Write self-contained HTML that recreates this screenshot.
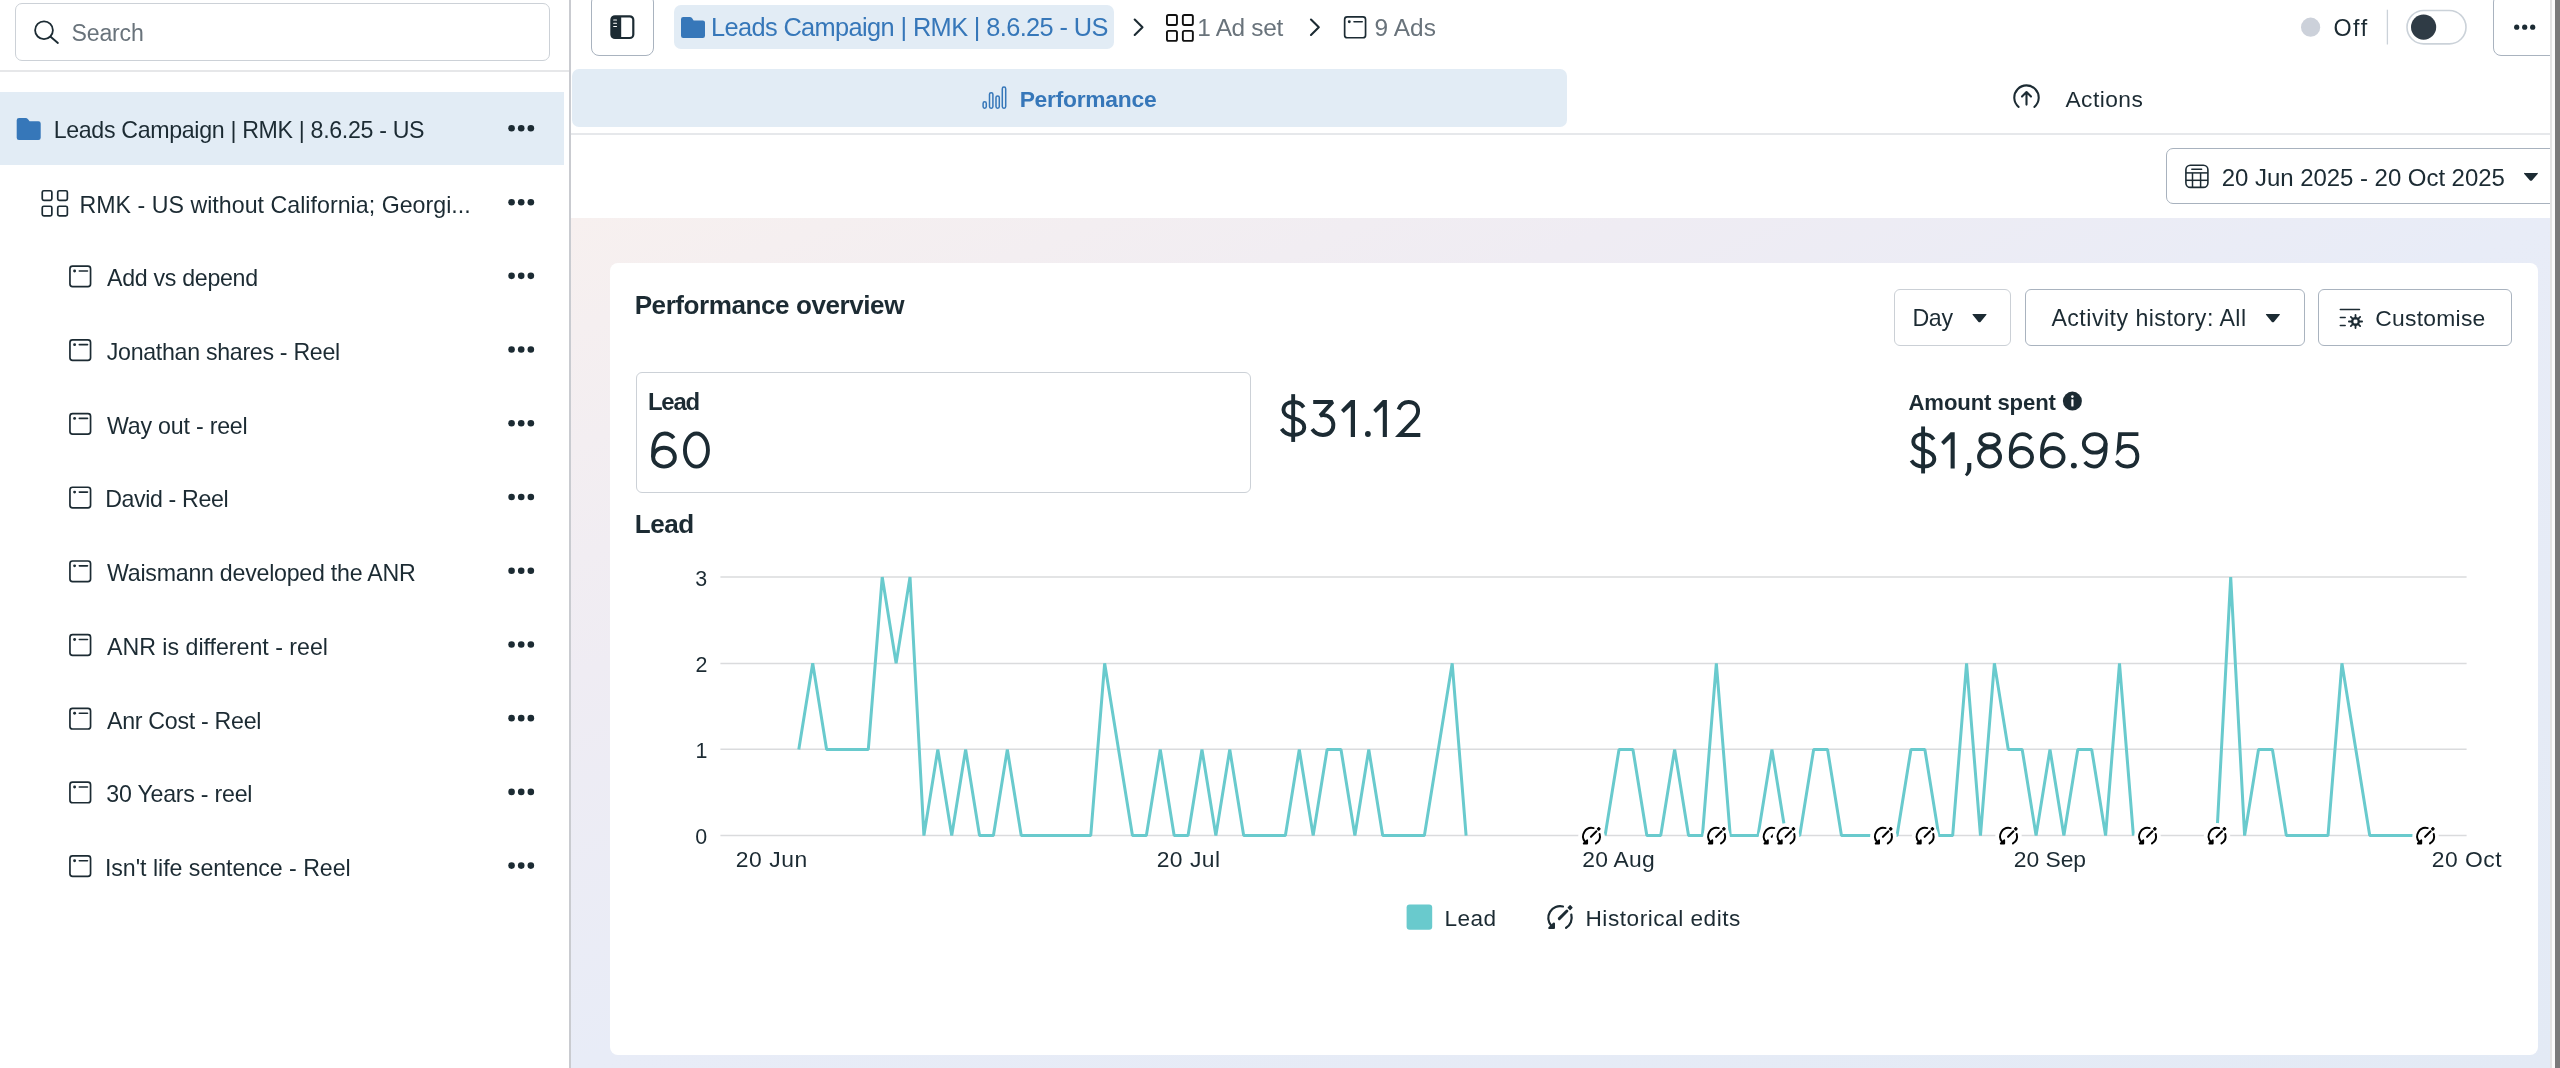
<!DOCTYPE html>
<html><head><meta charset="utf-8"><title>Ads Manager - Performance</title>
<style>
html,body{margin:0;padding:0;width:2560px;height:1068px;overflow:hidden;background:#fff;font-family:"Liberation Sans",sans-serif;}
.abs{position:absolute;box-sizing:border-box;}
#sidebar{left:0;top:0;width:570px;height:1068px;background:#fff;}
#sideborder{left:569.3px;top:0;width:1.8px;height:1068px;background:#c9cbd0;}
#search{left:15px;top:3.25px;width:534.5px;height:57.25px;border:1.4px solid #ccd1d7;border-radius:7px;background:#fff;}
#sep1{left:0;top:70.4px;width:569.5px;height:1.5px;background:#e6e7e9;}
#selrow{left:0;top:91.5px;width:564px;height:73.5px;background:#e2ecf5;}
#main{left:571px;top:0;width:1979.5px;height:1068px;overflow:hidden;background:#fff;}
#bg{left:571px;top:218px;width:1979.5px;height:850px;background:linear-gradient(to bottom right,#f7f0ef 0%,#efecf3 27%,#e8ecf7 50%,#e3eaf5 100%);}
#bgshade{left:571px;top:218px;width:1979.5px;height:850px;background:linear-gradient(180deg,rgba(255,255,255,0) 0%,rgba(228,234,247,0.55) 100%);}
#toggle{left:590.6px;top:-6px;width:63.2px;height:62.3px;border:1.5px solid #a9b3bf;border-radius:8px;background:#fff;}
#crumb{left:674px;top:5px;width:440px;height:44px;border-radius:7px;background:#e2ecf5;}
#perftab{left:572px;top:69px;width:995px;height:57.5px;border-radius:7px;background:#e2ecf5;}
#sep2{left:571px;top:133.2px;width:1979.5px;height:1.5px;background:#e6e8eb;}
#more{left:2493px;top:-6px;width:70px;height:62.2px;border:1.5px solid #a9b3bf;border-radius:8px;background:#fff;}
#date{left:2165.5px;top:148px;width:420px;height:56px;border:1.4px solid #a8b2be;border-radius:7px;background:#fff;}
#rline{left:2550.3px;top:0;width:1.8px;height:1068px;background:#e3e3e3;}
#rwhite{left:2552.1px;top:0;width:3.2px;height:1068px;background:#fbfbfb;}
#rdark{left:2555.3px;top:0;width:4.7px;height:1068px;background:#7a7a7a;}
#card{left:609.5px;top:263px;width:1928px;height:792px;border-radius:8px;background:#fff;}
#daybtn{left:1894px;top:289px;width:116.7px;height:56.7px;border:1.4px solid #cbd0d6;border-radius:6px;}
#actbtn{left:2025px;top:289px;width:279.5px;height:56.7px;border:1.4px solid #a9b3bf;border-radius:6px;}
#custbtn{left:2318px;top:289px;width:193.6px;height:56.7px;border:1.4px solid #a9b3bf;border-radius:6px;}
#leadbox{left:635.6px;top:372.4px;width:615.8px;height:120.6px;border:1.4px solid #ccd1d7;border-radius:6px;}
svg#ov{position:absolute;left:0;top:0;will-change:transform;}
svg text{font-family:"Liberation Sans",sans-serif;}
</style></head>
<body>
<div class="abs" id="sidebar"></div>
<div class="abs" id="search"></div>
<div class="abs" id="sep1"></div>
<div class="abs" id="selrow"></div>
<div class="abs" id="main"></div>
<div class="abs" id="bg"></div>
<div class="abs" id="toggle"></div>
<div class="abs" id="crumb"></div>
<div class="abs" id="perftab"></div>
<div class="abs" id="sep2"></div>
<div class="abs" id="more"></div>
<div class="abs" id="date"></div>
<div class="abs" id="rline"></div>
<div class="abs" id="rwhite"></div>
<div class="abs" id="rdark"></div>
<div class="abs" id="sideborder"></div>
<div class="abs" id="card"></div>
<div class="abs" id="daybtn"></div>
<div class="abs" id="actbtn"></div>
<div class="abs" id="custbtn"></div>
<div class="abs" id="leadbox"></div>
<svg id="ov" width="2560" height="1068" viewBox="0 0 2560 1068">
<g id="sidebar-icons">
<circle cx="44.0" cy="30.2" r="8.9" fill="none" stroke="#1c2b33" stroke-width="1.8"/>
<line x1="50.6" y1="36.8" x2="57.9" y2="43.0" stroke="#1c2b33" stroke-width="1.9" stroke-linecap="round"/>
<path d="M16.7,120.3 Q16.7,118 19,118 L25.6,118 Q27,118 28,119.2 L29.6,121.3 L38.4,121.3 Q40.7,121.3 40.7,123.6 L40.7,137.7 Q40.7,140 38.4,140 L19,140 Q16.7,140 16.7,137.7 Z" fill="#3677b9"/>
<circle cx="511.55" cy="128.20" r="3.3" fill="#1c2b33"/><circle cx="521.20" cy="128.20" r="3.3" fill="#1c2b33"/><circle cx="530.85" cy="128.20" r="3.3" fill="#1c2b33"/>
<rect x="42.25" y="190.75" width="9.60" height="9.60" rx="1.6" fill="none" stroke="#1c2b33" stroke-width="1.7"/><rect x="57.75" y="190.75" width="9.60" height="9.60" rx="1.6" fill="none" stroke="#1c2b33" stroke-width="1.7"/><rect x="42.25" y="206.25" width="9.60" height="9.60" rx="1.6" fill="none" stroke="#1c2b33" stroke-width="1.7"/><rect x="57.75" y="206.25" width="9.60" height="9.60" rx="1.6" fill="none" stroke="#1c2b33" stroke-width="1.7"/>
<circle cx="511.55" cy="202.30" r="3.3" fill="#1c2b33"/><circle cx="521.20" cy="202.30" r="3.3" fill="#1c2b33"/><circle cx="530.85" cy="202.30" r="3.3" fill="#1c2b33"/>
<rect x="69.95" y="266.10" width="20.60" height="20.60" rx="2.6" fill="none" stroke="#1c2b33" stroke-width="1.7"/><circle cx="74.60" cy="270.95" r="1.45" fill="#1c2b33"/><line x1="79.30" y1="270.95" x2="87.50" y2="270.95" stroke="#1c2b33" stroke-width="1.6" stroke-linecap="round"/>
<circle cx="511.55" cy="275.85" r="3.3" fill="#1c2b33"/><circle cx="521.20" cy="275.85" r="3.3" fill="#1c2b33"/><circle cx="530.85" cy="275.85" r="3.3" fill="#1c2b33"/>
<rect x="69.95" y="339.82" width="20.60" height="20.60" rx="2.6" fill="none" stroke="#1c2b33" stroke-width="1.7"/><circle cx="74.60" cy="344.67" r="1.45" fill="#1c2b33"/><line x1="79.30" y1="344.67" x2="87.50" y2="344.67" stroke="#1c2b33" stroke-width="1.6" stroke-linecap="round"/>
<circle cx="511.55" cy="349.57" r="3.3" fill="#1c2b33"/><circle cx="521.20" cy="349.57" r="3.3" fill="#1c2b33"/><circle cx="530.85" cy="349.57" r="3.3" fill="#1c2b33"/>
<rect x="69.95" y="413.54" width="20.60" height="20.60" rx="2.6" fill="none" stroke="#1c2b33" stroke-width="1.7"/><circle cx="74.60" cy="418.39" r="1.45" fill="#1c2b33"/><line x1="79.30" y1="418.39" x2="87.50" y2="418.39" stroke="#1c2b33" stroke-width="1.6" stroke-linecap="round"/>
<circle cx="511.55" cy="423.29" r="3.3" fill="#1c2b33"/><circle cx="521.20" cy="423.29" r="3.3" fill="#1c2b33"/><circle cx="530.85" cy="423.29" r="3.3" fill="#1c2b33"/>
<rect x="69.95" y="487.26" width="20.60" height="20.60" rx="2.6" fill="none" stroke="#1c2b33" stroke-width="1.7"/><circle cx="74.60" cy="492.11" r="1.45" fill="#1c2b33"/><line x1="79.30" y1="492.11" x2="87.50" y2="492.11" stroke="#1c2b33" stroke-width="1.6" stroke-linecap="round"/>
<circle cx="511.55" cy="497.01" r="3.3" fill="#1c2b33"/><circle cx="521.20" cy="497.01" r="3.3" fill="#1c2b33"/><circle cx="530.85" cy="497.01" r="3.3" fill="#1c2b33"/>
<rect x="69.95" y="560.98" width="20.60" height="20.60" rx="2.6" fill="none" stroke="#1c2b33" stroke-width="1.7"/><circle cx="74.60" cy="565.83" r="1.45" fill="#1c2b33"/><line x1="79.30" y1="565.83" x2="87.50" y2="565.83" stroke="#1c2b33" stroke-width="1.6" stroke-linecap="round"/>
<circle cx="511.55" cy="570.73" r="3.3" fill="#1c2b33"/><circle cx="521.20" cy="570.73" r="3.3" fill="#1c2b33"/><circle cx="530.85" cy="570.73" r="3.3" fill="#1c2b33"/>
<rect x="69.95" y="634.70" width="20.60" height="20.60" rx="2.6" fill="none" stroke="#1c2b33" stroke-width="1.7"/><circle cx="74.60" cy="639.55" r="1.45" fill="#1c2b33"/><line x1="79.30" y1="639.55" x2="87.50" y2="639.55" stroke="#1c2b33" stroke-width="1.6" stroke-linecap="round"/>
<circle cx="511.55" cy="644.45" r="3.3" fill="#1c2b33"/><circle cx="521.20" cy="644.45" r="3.3" fill="#1c2b33"/><circle cx="530.85" cy="644.45" r="3.3" fill="#1c2b33"/>
<rect x="69.95" y="708.42" width="20.60" height="20.60" rx="2.6" fill="none" stroke="#1c2b33" stroke-width="1.7"/><circle cx="74.60" cy="713.27" r="1.45" fill="#1c2b33"/><line x1="79.30" y1="713.27" x2="87.50" y2="713.27" stroke="#1c2b33" stroke-width="1.6" stroke-linecap="round"/>
<circle cx="511.55" cy="718.17" r="3.3" fill="#1c2b33"/><circle cx="521.20" cy="718.17" r="3.3" fill="#1c2b33"/><circle cx="530.85" cy="718.17" r="3.3" fill="#1c2b33"/>
<rect x="69.95" y="782.14" width="20.60" height="20.60" rx="2.6" fill="none" stroke="#1c2b33" stroke-width="1.7"/><circle cx="74.60" cy="786.99" r="1.45" fill="#1c2b33"/><line x1="79.30" y1="786.99" x2="87.50" y2="786.99" stroke="#1c2b33" stroke-width="1.6" stroke-linecap="round"/>
<circle cx="511.55" cy="791.89" r="3.3" fill="#1c2b33"/><circle cx="521.20" cy="791.89" r="3.3" fill="#1c2b33"/><circle cx="530.85" cy="791.89" r="3.3" fill="#1c2b33"/>
<rect x="69.95" y="855.86" width="20.60" height="20.60" rx="2.6" fill="none" stroke="#1c2b33" stroke-width="1.7"/><circle cx="74.60" cy="860.71" r="1.45" fill="#1c2b33"/><line x1="79.30" y1="860.71" x2="87.50" y2="860.71" stroke="#1c2b33" stroke-width="1.6" stroke-linecap="round"/>
<circle cx="511.55" cy="865.61" r="3.3" fill="#1c2b33"/><circle cx="521.20" cy="865.61" r="3.3" fill="#1c2b33"/><circle cx="530.85" cy="865.61" r="3.3" fill="#1c2b33"/>
</g>
<g id="header-icons">
<rect x="611.4" y="16.3" width="21.9" height="21.7" rx="3.6" fill="none" stroke="#1c2b33" stroke-width="2.2"/>
<path d="M613,16.3 L621.2,16.3 L621.2,38 L613,38 Q611.4,38 611.4,36 L611.4,18 Q611.4,16.3 613,16.3 Z" fill="#1c2b33"/>
<line x1="613.7" y1="20.0" x2="616.5" y2="20.0" stroke="#fff" stroke-width="1.1" stroke-linecap="round"/>
<line x1="613.7" y1="23.3" x2="616.5" y2="23.3" stroke="#fff" stroke-width="1.1" stroke-linecap="round"/>
<line x1="613.7" y1="26.5" x2="616.5" y2="26.5" stroke="#fff" stroke-width="1.1" stroke-linecap="round"/>
<path d="M681,19.2 Q681,17 683.2,17 L689.8,17 Q691.1,17 692,18.1 L693.6,20.4 L702.8,20.4 Q705,20.4 705,22.6 L705,35.8 Q705,38 702.8,38 L683.2,38 Q681,38 681,35.8 Z" fill="#3677b9"/>
<path d="M1134.7,19.5 L1142.5,27.2 L1134.7,34.9" fill="none" stroke="#1c2b33" stroke-width="2.1" stroke-linecap="round" stroke-linejoin="round"/>
<path d="M1311,19.5 L1318.8,27.2 L1311,34.9" fill="none" stroke="#1c2b33" stroke-width="2.1" stroke-linecap="round" stroke-linejoin="round"/>
<rect x="1166.95" y="14.95" width="10.00" height="10.00" rx="1.6" fill="none" stroke="#111" stroke-width="1.9"/><rect x="1182.85" y="14.95" width="10.00" height="10.00" rx="1.6" fill="none" stroke="#111" stroke-width="1.9"/><rect x="1166.95" y="30.85" width="10.00" height="10.00" rx="1.6" fill="none" stroke="#111" stroke-width="1.9"/><rect x="1182.85" y="30.85" width="10.00" height="10.00" rx="1.6" fill="none" stroke="#111" stroke-width="1.9"/>
<rect x="1344.65" y="16.85" width="20.90" height="20.90" rx="2.6" fill="none" stroke="#1c2b33" stroke-width="1.7"/><circle cx="1349.30" cy="21.70" r="1.45" fill="#1c2b33"/><line x1="1354.00" y1="21.70" x2="1362.20" y2="21.70" stroke="#1c2b33" stroke-width="1.6" stroke-linecap="round"/>
<rect x="983.10" y="101.80" width="3.20" height="6.40" rx="1.6" fill="none" stroke="#3677b9" stroke-width="1.5"/>
<rect x="989.50" y="92.70" width="3.40" height="15.50" rx="1.6" fill="none" stroke="#3677b9" stroke-width="1.5"/>
<rect x="996.00" y="95.90" width="3.30" height="12.30" rx="1.6" fill="none" stroke="#3677b9" stroke-width="1.5"/>
<rect x="1002.30" y="87.10" width="3.40" height="21.10" rx="1.6" fill="none" stroke="#3677b9" stroke-width="1.5"/>
<path d="M2018.66,106.95 A12.2,12.2 0 1 1 2034.34,106.95" fill="none" stroke="#1c2b33" stroke-width="2.1" stroke-linecap="round"/>
<path d="M2026.5,104.6 L2026.5,92.1 M2022.0,96.6 L2026.5,92.1 L2031.0,96.6" fill="none" stroke="#1c2b33" stroke-width="2.1" stroke-linecap="round" stroke-linejoin="round"/>
<circle cx="2310.6" cy="27.2" r="9.6" fill="#ccd1da"/>
<line x1="2387.4" y1="9.7" x2="2387.4" y2="44.5" stroke="#cbd2d9" stroke-width="1.3"/>
<rect x="2407" y="10.5" width="59" height="33.4" rx="16.7" fill="#fff" stroke="#cbd2d9" stroke-width="1.6"/>
<circle cx="2423.6" cy="27.1" r="12.6" fill="#2f3b45"/>
<circle cx="2516.70" cy="27.20" r="2.6" fill="#1c2b33"/><circle cx="2524.70" cy="27.20" r="2.6" fill="#1c2b33"/><circle cx="2532.70" cy="27.20" r="2.6" fill="#1c2b33"/>
<rect x="2185.9" y="165.2" width="22" height="22.2" rx="4.5" fill="none" stroke="#1c2b33" stroke-width="1.6"/>
<line x1="2191.8" y1="169.2" x2="2201.6" y2="169.2" stroke="#1c2b33" stroke-width="1.5" stroke-linecap="round"/>
<line x1="2185.9" y1="172.9" x2="2207.9" y2="172.9" stroke="#1c2b33" stroke-width="1.5"/>
<line x1="2185.9" y1="180.3" x2="2207.9" y2="180.3" stroke="#1c2b33" stroke-width="1.5"/>
<line x1="2192.5" y1="172.9" x2="2192.5" y2="187.4" stroke="#1c2b33" stroke-width="1.5"/>
<line x1="2200.6" y1="172.9" x2="2200.6" y2="187.4" stroke="#1c2b33" stroke-width="1.5"/>
<path d="M2524.50,173.00 L2537.40,173.00 Q2538.40,172.40 2537.60,174.00 L2531.95,180.40 Q2530.95,181.00 2529.95,180.40 L2524.30,174.00 Q2523.50,172.40 2524.50,173.00 Z" fill="#1c2b33"/>
</g>
<g id="card-icons">
<path d="M1973.00,314.10 L1986.00,314.10 Q1987.00,313.50 1986.20,315.10 L1980.50,321.90 Q1979.50,322.50 1978.50,321.90 L1972.80,315.10 Q1972.00,313.50 1973.00,314.10 Z" fill="#1c2b33"/>
<path d="M2266.40,314.10 L2279.40,314.10 Q2280.40,313.50 2279.60,315.10 L2273.90,321.90 Q2272.90,322.50 2271.90,321.90 L2266.20,315.10 Q2265.40,313.50 2266.40,314.10 Z" fill="#1c2b33"/>
<line x1="2340.3" y1="309.5" x2="2359.5" y2="309.5" stroke="#1c2b33" stroke-width="1.5" stroke-linecap="round"/>
<line x1="2340.3" y1="317.4" x2="2345.2" y2="317.4" stroke="#1c2b33" stroke-width="1.5" stroke-linecap="round"/>
<line x1="2340.3" y1="325.4" x2="2345.2" y2="325.4" stroke="#1c2b33" stroke-width="1.5" stroke-linecap="round"/>
<line x1="2355.50" y1="318.50" x2="2355.50" y2="314.90" stroke="#1c2b33" stroke-width="1.8" stroke-linecap="round"/><line x1="2357.62" y1="319.38" x2="2360.17" y2="316.83" stroke="#1c2b33" stroke-width="1.8" stroke-linecap="round"/><line x1="2358.50" y1="321.50" x2="2362.10" y2="321.50" stroke="#1c2b33" stroke-width="1.8" stroke-linecap="round"/><line x1="2357.62" y1="323.62" x2="2360.17" y2="326.17" stroke="#1c2b33" stroke-width="1.8" stroke-linecap="round"/><line x1="2355.50" y1="324.50" x2="2355.50" y2="328.10" stroke="#1c2b33" stroke-width="1.8" stroke-linecap="round"/><line x1="2353.38" y1="323.62" x2="2350.83" y2="326.17" stroke="#1c2b33" stroke-width="1.8" stroke-linecap="round"/><line x1="2352.50" y1="321.50" x2="2348.90" y2="321.50" stroke="#1c2b33" stroke-width="1.8" stroke-linecap="round"/><line x1="2353.38" y1="319.38" x2="2350.83" y2="316.83" stroke="#1c2b33" stroke-width="1.8" stroke-linecap="round"/>
<circle cx="2355.5" cy="321.5" r="3.4" fill="none" stroke="#1c2b33" stroke-width="2.1"/>
<circle cx="2072.4" cy="401.1" r="9.5" fill="#1c2b33"/>
<circle cx="2072.4" cy="396.6" r="1.3" fill="#fff"/>
<rect x="2071.3" y="399.3" width="2.2" height="7.2" rx="0.6" fill="#fff"/>
<g transform="translate(651.20,431.50) scale(1.0000,1.0137)"><ellipse cx="12.8" cy="25.3" rx="10.85" ry="9.35" fill="none" stroke="#1c2b33" stroke-width="3.9"/><path d="M22.6,6.6 C20.4,3.6 17.3,1.95 13.5,1.95 C6.2,1.95 1.95,9.6 1.95,20.5 L1.95,25.5" fill="none" stroke="#1c2b33" stroke-width="3.9"/></g><g transform="translate(683.00,431.50) scale(1.0000,1.0137)"><ellipse cx="13.45" cy="18.3" rx="11.5" ry="16.35" fill="none" stroke="#1c2b33" stroke-width="3.9"/></g>
<g transform="translate(1280.00,400.00) scale(0.9906,1.0082)"><path d="M23.9,7.3 C21.8,3.9 18.1,1.95 13.3,1.95 C7.3,1.95 3.5,5.1 3.5,9.9 C3.5,14.6 7.3,16.5 13.2,18.0 C20.2,19.7 24.5,22.1 24.5,27.1 C24.5,31.9 20.0,34.65 13.3,34.65 C8.1,34.65 4.0,32.3 1.6,28.6" fill="none" stroke="#1c2b33" stroke-width="3.9"/><line x1="13.3" y1="-5.8" x2="13.3" y2="41.6" stroke="#1c2b33" stroke-width="3.9"/></g><g transform="translate(1310.60,400.00) scale(1.0000,1.0082)"><path d="M2.6,1.95 L22.0,1.95 L9.6,15.5 C10.7,15.2 11.6,15.0 12.6,15.0 C18.7,15.0 22.75,19.1 22.75,24.9 C22.75,30.8 18.4,34.65 12.3,34.65 C7.8,34.65 4.0,32.6 1.6,28.9" fill="none" stroke="#1c2b33" stroke-width="3.9" stroke-linejoin="bevel"/></g><g transform="translate(1340.90,400.00) scale(1.0292,1.0082)"><path d="M9.6,0 L13.7,0 L13.7,36.6 L9.6,36.6 L9.6,6.4 L2.8,12.8 L0.1,9.8 Z" fill="#1c2b33"/></g><g transform="translate(1365.00,400.00) scale(0.9914,1.0082)"><circle cx="2.9" cy="33.7" r="2.9" fill="#1c2b33"/></g><g transform="translate(1373.10,400.00) scale(1.0073,1.0082)"><path d="M9.6,0 L13.7,0 L13.7,36.6 L9.6,36.6 L9.6,6.4 L2.8,12.8 L0.1,9.8 Z" fill="#1c2b33"/></g><g transform="translate(1396.60,400.00) scale(1.0000,1.0082)"><path d="M2.0,9.4 C3.7,4.7 7.4,1.95 12.0,1.95 C17.8,1.95 21.5,5.7 21.5,11.0 C21.5,14.6 19.8,17.4 16.7,20.5 L3.0,34.65 L23.7,34.65" fill="none" stroke="#1c2b33" stroke-width="3.9" stroke-linejoin="miter"/></g>
<g transform="translate(1909.80,432.20) scale(1.0000,0.9918)"><path d="M23.9,7.3 C21.8,3.9 18.1,1.95 13.3,1.95 C7.3,1.95 3.5,5.1 3.5,9.9 C3.5,14.6 7.3,16.5 13.2,18.0 C20.2,19.7 24.5,22.1 24.5,27.1 C24.5,31.9 20.0,34.65 13.3,34.65 C8.1,34.65 4.0,32.3 1.6,28.6" fill="none" stroke="#1c2b33" stroke-width="3.9"/><line x1="13.3" y1="-5.8" x2="13.3" y2="41.6" stroke="#1c2b33" stroke-width="3.9"/></g><g transform="translate(1941.00,432.20) scale(1.0000,0.9918)"><path d="M9.6,0 L13.7,0 L13.7,36.6 L9.6,36.6 L9.6,6.4 L2.8,12.8 L0.1,9.8 Z" fill="#1c2b33"/></g><g transform="translate(1964.50,432.20) scale(1.0000,0.9918)"><path d="M2.7,31.1 L6.8,31.1 L6.8,36.4 C6.8,39.6 5.4,42.2 2.4,44.3 L0.3,42.6 C2.0,41.0 2.7,39.2 2.7,36.4 Z" fill="#1c2b33"/></g><g transform="translate(1977.10,432.20) scale(1.0000,0.9918)"><ellipse cx="12.45" cy="8.2" rx="9.2" ry="6.25" fill="none" stroke="#1c2b33" stroke-width="3.9"/><ellipse cx="12.45" cy="25.0" rx="10.5" ry="9.65" fill="none" stroke="#1c2b33" stroke-width="3.9"/></g><g transform="translate(2008.90,432.20) scale(0.9805,0.9918)"><ellipse cx="12.8" cy="25.3" rx="10.85" ry="9.35" fill="none" stroke="#1c2b33" stroke-width="3.9"/><path d="M22.6,6.6 C20.4,3.6 17.3,1.95 13.5,1.95 C6.2,1.95 1.95,9.6 1.95,20.5 L1.95,25.5" fill="none" stroke="#1c2b33" stroke-width="3.9"/></g><g transform="translate(2040.10,432.20) scale(0.9922,0.9918)"><ellipse cx="12.8" cy="25.3" rx="10.85" ry="9.35" fill="none" stroke="#1c2b33" stroke-width="3.9"/><path d="M22.6,6.6 C20.4,3.6 17.3,1.95 13.5,1.95 C6.2,1.95 1.95,9.6 1.95,20.5 L1.95,25.5" fill="none" stroke="#1c2b33" stroke-width="3.9"/></g><g transform="translate(2070.90,432.20) scale(1.0172,0.9918)"><circle cx="2.9" cy="33.7" r="2.9" fill="#1c2b33"/></g><g transform="translate(2082.10,432.20) scale(1.0000,0.9918)"><ellipse cx="12.6" cy="11.3" rx="10.85" ry="9.35" fill="none" stroke="#1c2b33" stroke-width="3.9"/><path d="M2.8,30.0 C5.0,33.0 8.1,34.65 11.9,34.65 C19.2,34.65 23.45,27.0 23.45,16.1 L23.45,11.1" fill="none" stroke="#1c2b33" stroke-width="3.9"/></g><g transform="translate(2114.80,432.20) scale(1.0000,0.9918)"><path d="M23.6,1.95 L5.2,1.95 L3.9,17.8 C6.0,15.3 9.0,13.8 12.6,13.8 C18.6,13.8 22.55,18.3 22.55,24.5 C22.55,30.7 18.5,34.65 12.4,34.65 C7.6,34.65 4.0,32.5 1.7,28.8" fill="none" stroke="#1c2b33" stroke-width="3.9" stroke-linejoin="miter"/></g>
</g>
<g id="chart">
<line x1="720.4" y1="577.1" x2="2466.6" y2="577.1" stroke="#dadbdd" stroke-width="1.5"/>
<line x1="720.4" y1="663.4" x2="2466.6" y2="663.4" stroke="#dadbdd" stroke-width="1.5"/>
<line x1="720.4" y1="749.3" x2="2466.6" y2="749.3" stroke="#dadbdd" stroke-width="1.5"/>
<line x1="720.4" y1="835.6" x2="2466.6" y2="835.6" stroke="#dadbdd" stroke-width="1.5"/>
<path d="M798.80,749.43 L812.71,663.27 L826.61,749.43 L840.51,749.43 L854.41,749.43 L868.31,749.43 L882.22,577.10 L896.12,663.27 L910.02,577.10 L923.92,835.60 L937.82,749.43 L951.73,835.60 L965.63,749.43 L979.53,835.60 L993.43,835.60 L1007.33,749.43 L1021.24,835.60 L1035.14,835.60 L1049.04,835.60 L1062.94,835.60 L1076.84,835.60 L1090.75,835.60 L1104.65,663.27 L1118.55,749.43 L1132.45,835.60 L1146.35,835.60 L1160.26,749.43 L1174.16,835.60 L1188.06,835.60 L1201.96,749.43 L1215.86,835.60 L1229.77,749.43 L1243.67,835.60 L1257.57,835.60 L1271.47,835.60 L1285.37,835.60 L1299.28,749.43 L1313.18,835.60 L1327.08,749.43 L1340.98,749.43 L1354.88,835.60 L1368.79,749.43 L1382.69,835.60 L1396.59,835.60 L1410.49,835.60 L1424.39,835.60 L1438.30,749.43 L1452.20,663.27 L1466.10,835.60 M1605.12,835.60 L1619.02,749.43 L1632.92,749.43 L1646.83,835.60 L1660.73,835.60 L1674.63,749.43 L1688.53,835.60 L1702.43,835.60 L1716.34,663.27 L1730.24,835.60 L1744.14,835.60 L1758.04,835.60 L1771.94,749.43 L1785.85,835.60 L1799.75,835.60 L1813.65,749.43 L1827.55,749.43 L1841.45,835.60 L1855.36,835.60 L1869.26,835.60 L1883.16,835.60 L1897.06,835.60 L1910.96,749.43 L1924.87,749.43 L1938.77,835.60 L1952.67,835.60 L1966.57,663.27 L1980.47,835.60 L1994.38,663.27 L2008.28,749.43 L2022.18,749.43 L2036.08,835.60 L2049.98,749.43 L2063.89,835.60 L2077.79,749.43 L2091.69,749.43 L2105.59,835.60 L2119.49,663.27 L2133.40,835.60 M2216.81,835.60 L2230.71,577.10 L2244.61,835.60 L2258.51,749.43 L2272.42,749.43 L2286.32,835.60 L2300.22,835.60 L2314.12,835.60 L2328.02,835.60 L2341.93,663.27 L2355.83,749.43 L2369.73,835.60 L2383.63,835.60 L2397.53,835.60 L2411.44,835.60 L2425.34,835.60" fill="none" stroke="#69cacd" stroke-width="3" stroke-linejoin="bevel"/>
<circle cx="1591.42" cy="836.3" r="13.2" fill="#fff"/>
<path d="M1593.65,828.09 A8.50,8.50 0 0 0 1585.23,841.99" fill="none" stroke="#000" stroke-width="1.95" stroke-linecap="round"/><path d="M1583.79,843.57 L1587.10,843.57 L1587.10,840.33 Z" fill="#000" stroke="#000" stroke-width="1.95" stroke-linejoin="round" stroke-linecap="round"/><path d="M1599.63,833.92 A8.50,8.50 0 0 1 1595.88,843.43" fill="none" stroke="#000" stroke-width="1.95" stroke-linecap="round"/><path d="M1590.99,836.80 L1596.46,831.33" stroke="#000" stroke-width="2.05" stroke-linecap="round"/><path d="M1598.76,827.52 L1600.13,828.88 L1598.76,830.25 L1597.39,828.88 Z" fill="#000" stroke="#000" stroke-width="1.17" stroke-linejoin="round"/>
<circle cx="1716.54" cy="836.3" r="13.2" fill="#fff"/>
<path d="M1718.77,828.09 A8.50,8.50 0 0 0 1710.34,841.99" fill="none" stroke="#000" stroke-width="1.95" stroke-linecap="round"/><path d="M1708.90,843.57 L1712.22,843.57 L1712.22,840.33 Z" fill="#000" stroke="#000" stroke-width="1.95" stroke-linejoin="round" stroke-linecap="round"/><path d="M1724.74,833.92 A8.50,8.50 0 0 1 1721.00,843.43" fill="none" stroke="#000" stroke-width="1.95" stroke-linecap="round"/><path d="M1716.10,836.80 L1721.58,831.33" stroke="#000" stroke-width="2.05" stroke-linecap="round"/><path d="M1723.88,827.52 L1725.25,828.88 L1723.88,830.25 L1722.51,828.88 Z" fill="#000" stroke="#000" stroke-width="1.17" stroke-linejoin="round"/>
<circle cx="1772.14" cy="836.3" r="13.2" fill="#fff"/>
<path d="M1774.38,828.09 A8.50,8.50 0 0 0 1765.95,841.99" fill="none" stroke="#000" stroke-width="1.95" stroke-linecap="round"/><path d="M1764.51,843.57 L1767.82,843.57 L1767.82,840.33 Z" fill="#000" stroke="#000" stroke-width="1.95" stroke-linejoin="round" stroke-linecap="round"/><path d="M1780.35,833.92 A8.50,8.50 0 0 1 1776.61,843.43" fill="none" stroke="#000" stroke-width="1.95" stroke-linecap="round"/><path d="M1771.71,836.80 L1777.18,831.33" stroke="#000" stroke-width="2.05" stroke-linecap="round"/><path d="M1779.49,827.52 L1780.86,828.88 L1779.49,830.25 L1778.12,828.88 Z" fill="#000" stroke="#000" stroke-width="1.17" stroke-linejoin="round"/>
<circle cx="1786.05" cy="836.3" r="13.2" fill="#fff"/>
<path d="M1788.28,828.09 A8.50,8.50 0 0 0 1779.85,841.99" fill="none" stroke="#000" stroke-width="1.95" stroke-linecap="round"/><path d="M1778.41,843.57 L1781.73,843.57 L1781.73,840.33 Z" fill="#000" stroke="#000" stroke-width="1.95" stroke-linejoin="round" stroke-linecap="round"/><path d="M1794.25,833.92 A8.50,8.50 0 0 1 1790.51,843.43" fill="none" stroke="#000" stroke-width="1.95" stroke-linecap="round"/><path d="M1785.61,836.80 L1791.09,831.33" stroke="#000" stroke-width="2.05" stroke-linecap="round"/><path d="M1793.39,827.52 L1794.76,828.88 L1793.39,830.25 L1792.02,828.88 Z" fill="#000" stroke="#000" stroke-width="1.17" stroke-linejoin="round"/>
<circle cx="1883.36" cy="836.3" r="13.2" fill="#fff"/>
<path d="M1885.59,828.09 A8.50,8.50 0 0 0 1877.17,841.99" fill="none" stroke="#000" stroke-width="1.95" stroke-linecap="round"/><path d="M1875.73,843.57 L1879.04,843.57 L1879.04,840.33 Z" fill="#000" stroke="#000" stroke-width="1.95" stroke-linejoin="round" stroke-linecap="round"/><path d="M1891.57,833.92 A8.50,8.50 0 0 1 1887.82,843.43" fill="none" stroke="#000" stroke-width="1.95" stroke-linecap="round"/><path d="M1882.93,836.80 L1888.40,831.33" stroke="#000" stroke-width="2.05" stroke-linecap="round"/><path d="M1890.70,827.52 L1892.07,828.88 L1890.70,830.25 L1889.34,828.88 Z" fill="#000" stroke="#000" stroke-width="1.17" stroke-linejoin="round"/>
<circle cx="1925.07" cy="836.3" r="13.2" fill="#fff"/>
<path d="M1927.30,828.09 A8.50,8.50 0 0 0 1918.87,841.99" fill="none" stroke="#000" stroke-width="1.95" stroke-linecap="round"/><path d="M1917.43,843.57 L1920.75,843.57 L1920.75,840.33 Z" fill="#000" stroke="#000" stroke-width="1.95" stroke-linejoin="round" stroke-linecap="round"/><path d="M1933.27,833.92 A8.50,8.50 0 0 1 1929.53,843.43" fill="none" stroke="#000" stroke-width="1.95" stroke-linecap="round"/><path d="M1924.63,836.80 L1930.11,831.33" stroke="#000" stroke-width="2.05" stroke-linecap="round"/><path d="M1932.41,827.52 L1933.78,828.88 L1932.41,830.25 L1931.04,828.88 Z" fill="#000" stroke="#000" stroke-width="1.17" stroke-linejoin="round"/>
<circle cx="2008.48" cy="836.3" r="13.2" fill="#fff"/>
<path d="M2010.71,828.09 A8.50,8.50 0 0 0 2002.29,841.99" fill="none" stroke="#000" stroke-width="1.95" stroke-linecap="round"/><path d="M2000.85,843.57 L2004.16,843.57 L2004.16,840.33 Z" fill="#000" stroke="#000" stroke-width="1.95" stroke-linejoin="round" stroke-linecap="round"/><path d="M2016.69,833.92 A8.50,8.50 0 0 1 2012.94,843.43" fill="none" stroke="#000" stroke-width="1.95" stroke-linecap="round"/><path d="M2008.05,836.80 L2013.52,831.33" stroke="#000" stroke-width="2.05" stroke-linecap="round"/><path d="M2015.82,827.52 L2017.19,828.88 L2015.82,830.25 L2014.45,828.88 Z" fill="#000" stroke="#000" stroke-width="1.17" stroke-linejoin="round"/>
<circle cx="2147.50" cy="836.3" r="13.2" fill="#fff"/>
<path d="M2149.73,828.09 A8.50,8.50 0 0 0 2141.31,841.99" fill="none" stroke="#000" stroke-width="1.95" stroke-linecap="round"/><path d="M2139.87,843.57 L2143.18,843.57 L2143.18,840.33 Z" fill="#000" stroke="#000" stroke-width="1.95" stroke-linejoin="round" stroke-linecap="round"/><path d="M2155.71,833.92 A8.50,8.50 0 0 1 2151.96,843.43" fill="none" stroke="#000" stroke-width="1.95" stroke-linecap="round"/><path d="M2147.07,836.80 L2152.54,831.33" stroke="#000" stroke-width="2.05" stroke-linecap="round"/><path d="M2154.84,827.52 L2156.21,828.88 L2154.84,830.25 L2153.47,828.88 Z" fill="#000" stroke="#000" stroke-width="1.17" stroke-linejoin="round"/>
<circle cx="2217.01" cy="836.3" r="13.2" fill="#fff"/>
<path d="M2219.24,828.09 A8.50,8.50 0 0 0 2210.82,841.99" fill="none" stroke="#000" stroke-width="1.95" stroke-linecap="round"/><path d="M2209.38,843.57 L2212.69,843.57 L2212.69,840.33 Z" fill="#000" stroke="#000" stroke-width="1.95" stroke-linejoin="round" stroke-linecap="round"/><path d="M2225.22,833.92 A8.50,8.50 0 0 1 2221.47,843.43" fill="none" stroke="#000" stroke-width="1.95" stroke-linecap="round"/><path d="M2216.58,836.80 L2222.05,831.33" stroke="#000" stroke-width="2.05" stroke-linecap="round"/><path d="M2224.35,827.52 L2225.72,828.88 L2224.35,830.25 L2222.98,828.88 Z" fill="#000" stroke="#000" stroke-width="1.17" stroke-linejoin="round"/>
<circle cx="2425.54" cy="836.3" r="13.2" fill="#fff"/>
<path d="M2427.77,828.09 A8.50,8.50 0 0 0 2419.35,841.99" fill="none" stroke="#000" stroke-width="1.95" stroke-linecap="round"/><path d="M2417.91,843.57 L2421.22,843.57 L2421.22,840.33 Z" fill="#000" stroke="#000" stroke-width="1.95" stroke-linejoin="round" stroke-linecap="round"/><path d="M2433.75,833.92 A8.50,8.50 0 0 1 2430.00,843.43" fill="none" stroke="#000" stroke-width="1.95" stroke-linecap="round"/><path d="M2425.11,836.80 L2430.58,831.33" stroke="#000" stroke-width="2.05" stroke-linecap="round"/><path d="M2432.88,827.52 L2434.25,828.88 L2432.88,830.25 L2431.51,828.88 Z" fill="#000" stroke="#000" stroke-width="1.17" stroke-linejoin="round"/>
<rect x="1406.6" y="904.5" width="25.6" height="25.2" rx="3" fill="#69cacd"/>
<path d="M1563.00,906.50 A11.80,11.80 0 0 0 1551.30,925.80" fill="none" stroke="#1c2b33" stroke-width="2.2" stroke-linecap="round"/><path d="M1549.30,928.00 L1553.90,928.00 L1553.90,923.50 Z" fill="#1c2b33" stroke="#1c2b33" stroke-width="2.2" stroke-linejoin="round" stroke-linecap="round"/><path d="M1571.30,914.60 A11.80,11.80 0 0 1 1566.10,927.80" fill="none" stroke="#1c2b33" stroke-width="2.2" stroke-linecap="round"/><path d="M1559.30,918.60 L1566.90,911.00" stroke="#1c2b33" stroke-width="2.97" stroke-linecap="round"/><path d="M1570.10,905.70 L1572.00,907.60 L1570.10,909.50 L1568.20,907.60 Z" fill="#1c2b33" stroke="#1c2b33" stroke-width="1.32" stroke-linejoin="round"/>
</g>
<g id="texts">
<text x="71.58" y="41.25" font-size="23.10" font-weight="400" fill="#69737b" letter-spacing="-0.193">Search</text>
<text x="53.64" y="138.25" font-size="23.19" font-weight="400" fill="#1c2b33" letter-spacing="-0.333">Leads Campaign | RMK | 8.6.25 - US</text>
<text x="79.39" y="212.50" font-size="23.19" font-weight="400" fill="#1c2b33" letter-spacing="0.025">RMK - US without California; Georgi...</text>
<text x="107.00" y="286.25" font-size="23.19" font-weight="400" fill="#1c2b33" letter-spacing="-0.305">Add vs depend</text>
<text x="106.77" y="359.97" font-size="23.19" font-weight="400" fill="#1c2b33" letter-spacing="-0.301">Jonathan shares - Reel</text>
<text x="107.00" y="433.69" font-size="23.19" font-weight="400" fill="#1c2b33" letter-spacing="-0.213">Way out - reel</text>
<text x="105.14" y="507.41" font-size="23.19" font-weight="400" fill="#1c2b33" letter-spacing="-0.371">David - Reel</text>
<text x="107.00" y="581.13" font-size="23.19" font-weight="400" fill="#1c2b33" letter-spacing="-0.249">Waismann developed the ANR</text>
<text x="107.00" y="654.85" font-size="23.19" font-weight="400" fill="#1c2b33" letter-spacing="-0.013">ANR is different - reel</text>
<text x="107.00" y="728.57" font-size="23.19" font-weight="400" fill="#1c2b33" letter-spacing="-0.290">Anr Cost - Reel</text>
<text x="106.30" y="802.29" font-size="23.19" font-weight="400" fill="#1c2b33" letter-spacing="-0.237">30 Years - reel</text>
<text x="104.91" y="876.01" font-size="23.19" font-weight="400" fill="#1c2b33" letter-spacing="-0.036">Isn't life sentence - Reel</text>
<text x="710.97" y="36.25" font-size="25.36" font-weight="400" fill="#3677b9" letter-spacing="-0.615">Leads Campaign | RMK | 8.6.25 - US</text>
<text x="1197.29" y="35.60" font-size="24.42" font-weight="400" fill="#69737b" letter-spacing="-0.320">1 Ad set</text>
<text x="1374.62" y="35.60" font-size="24.42" font-weight="400" fill="#69737b" letter-spacing="0.066">9 Ads</text>
<text x="2333.47" y="36.00" font-size="23.29" font-weight="400" fill="#1c2b33" letter-spacing="1.525">Off</text>
<text x="1019.63" y="107.00" font-size="22.83" font-weight="700" fill="#3677b9" letter-spacing="-0.259">Performance</text>
<text x="2065.40" y="106.50" font-size="22.75" font-weight="400" fill="#1c2b33" letter-spacing="0.478">Actions</text>
<text x="2221.80" y="185.80" font-size="24.00" font-weight="400" fill="#1c2b33" letter-spacing="-0.047">20 Jun 2025 - 20 Oct 2025</text>
<text x="634.63" y="314.30" font-size="26.09" font-weight="700" fill="#1c2b33" letter-spacing="-0.447">Performance overview</text>
<text x="1912.44" y="326.40" font-size="23.19" font-weight="400" fill="#1c2b33" letter-spacing="-0.341">Day</text>
<text x="2051.40" y="326.40" font-size="23.19" font-weight="400" fill="#1c2b33" letter-spacing="0.460">Activity history: All</text>
<text x="2375.16" y="326.40" font-size="22.86" font-weight="400" fill="#1c2b33" letter-spacing="0.275">Customise</text>
<text x="647.97" y="410.40" font-size="23.91" font-weight="700" fill="#1c2b33" letter-spacing="-1.241">Lead</text>
<text x="1908.46" y="410.20" font-size="22.14" font-weight="700" fill="#1c2b33" letter-spacing="-0.112">Amount spent</text>
<text x="634.63" y="532.50" font-size="26.09" font-weight="700" fill="#1c2b33" letter-spacing="-0.411">Lead</text>
<text x="735.86" y="866.80" font-size="22.86" font-weight="400" fill="#1c2b33" letter-spacing="0.520">20 Jun</text>
<text x="1156.66" y="866.80" font-size="22.86" font-weight="400" fill="#1c2b33" letter-spacing="0.494">20 Jul</text>
<text x="1582.16" y="866.80" font-size="22.86" font-weight="400" fill="#1c2b33" letter-spacing="0.296">20 Aug</text>
<text x="2013.86" y="866.80" font-size="22.86" font-weight="400" fill="#1c2b33" letter-spacing="-0.055">20 Sep</text>
<text x="2431.76" y="866.80" font-size="22.86" font-weight="400" fill="#1c2b33" letter-spacing="0.492">20 Oct</text>
<text x="1444.59" y="925.80" font-size="22.61" font-weight="400" fill="#1c2b33" letter-spacing="0.394">Lead</text>
<text x="1585.49" y="925.80" font-size="22.61" font-weight="400" fill="#1c2b33" letter-spacing="0.526">Historical edits</text>
<text x="695.26" y="585.90" font-size="21.43" font-weight="400" fill="#1c2b33" letter-spacing="0.000">3</text>
<text x="695.47" y="672.20" font-size="21.43" font-weight="400" fill="#1c2b33" letter-spacing="0.000">2</text>
<text x="695.47" y="758.10" font-size="21.43" font-weight="400" fill="#1c2b33" letter-spacing="0.000">1</text>
<text x="695.26" y="844.40" font-size="21.43" font-weight="400" fill="#1c2b33" letter-spacing="0.000">0</text>
</g>
</svg>
</body></html>
